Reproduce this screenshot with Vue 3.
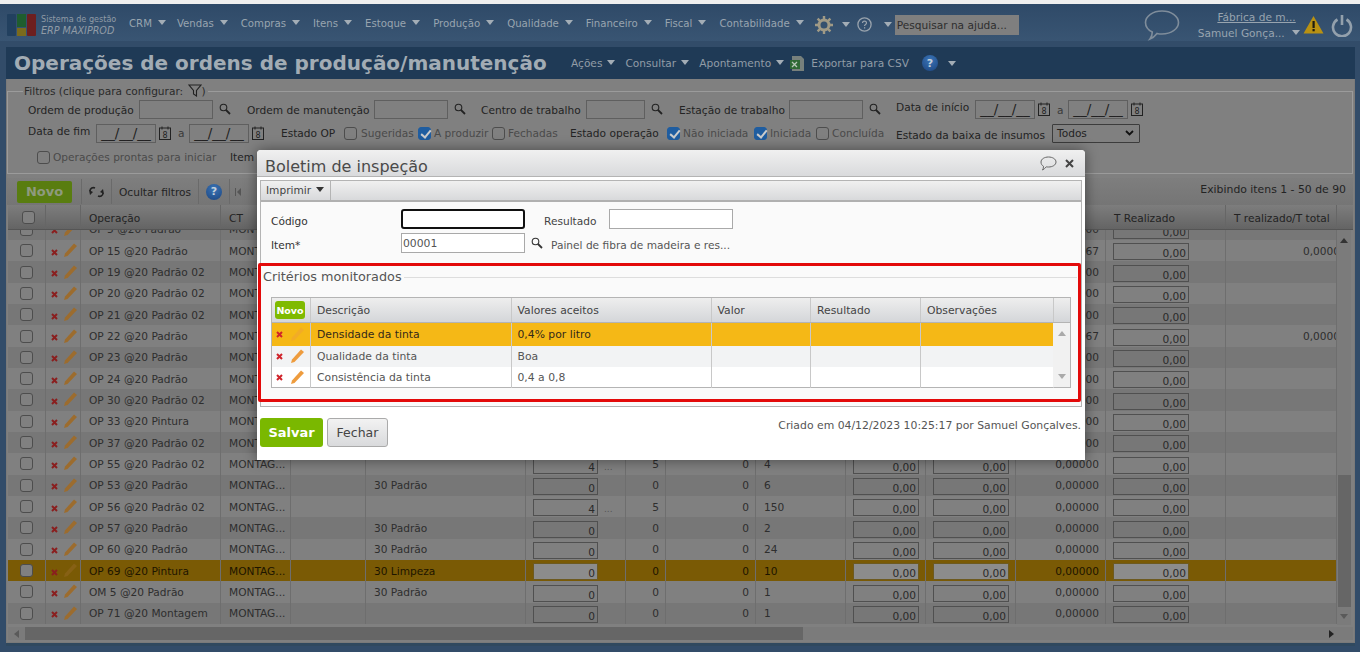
<script setup>
const navItems = ['CRM', 'Vendas', 'Compras', 'Itens', 'Estoque', 'Produção', 'Qualidade', 'Financeiro', 'Fiscal', 'Contabilidade']

// qty / extra / a / b / text: what can be seen around the dialog
const rows = [
  { op: 'OP 5 @20 Padrão', ct: 'MONTAG...', est: '30 Padrão', qty: '0', a: '0', b: '0', c: '1', t: '0,00000' },
  { op: 'OP 15 @20 Padrão', ct: 'MONTAG...', est: '30 Padrão', qty: '0', a: '0', b: '0', c: '1', t: '0,00067', r: '0,00000' },
  { op: 'OP 19 @20 Padrão 02', ct: 'MONTAG...', est: '', qty: '4', a: '5', b: '0', c: '4', t: '0,00000' },
  { op: 'OP 20 @20 Padrão 02', ct: 'MONTAG...', est: '', qty: '4', a: '5', b: '0', c: '4', t: '0,00000' },
  { op: 'OP 21 @20 Padrão 02', ct: 'MONTAG...', est: '', qty: '4', a: '5', b: '0', c: '4', t: '0,00000' },
  { op: 'OP 22 @20 Padrão', ct: 'MONTAG...', est: '30 Padrão', qty: '0', a: '0', b: '0', c: '1', t: '0,00067', r: '0,00000' },
  { op: 'OP 23 @20 Padrão', ct: 'MONTAG...', est: '30 Padrão', qty: '0', a: '0', b: '0', c: '1', t: '0,00000' },
  { op: 'OP 24 @20 Padrão', ct: 'MONTAG...', est: '30 Padrão', qty: '0', a: '0', b: '0', c: '1', t: '0,00000' },
  { op: 'OP 30 @20 Padrão 02', ct: 'MONTAG...', est: '', qty: '4', a: '5', b: '0', c: '4', t: '0,00000' },
  { op: 'OP 33 @20 Pintura', ct: 'MONTAG...', est: '30 Padrão', qty: '0', a: '0', b: '0', c: '1', t: '0,00000' },
  { op: 'OP 37 @20 Padrão 02', ct: 'MONTAG...', est: '', qty: '4', a: '5', b: '0', c: '4', t: '0,00000' },
  { op: 'OP 55 @20 Padrão 02', ct: 'MONTAG...', est: '', qty: '4', a: '5', b: '0', c: '4', t: '0,00000' },
  { op: 'OP 53 @20 Padrão', ct: 'MONTAG...', est: '30 Padrão', qty: '0', a: '0', b: '0', c: '6', t: '0,00000' },
  { op: 'OP 56 @20 Padrão 02', ct: 'MONTAG...', est: '', qty: '4', a: '5', b: '0', c: '150', t: '0,00000' },
  { op: 'OP 57 @20 Padrão', ct: 'MONTAG...', est: '30 Padrão', qty: '0', a: '0', b: '0', c: '2', t: '0,00000' },
  { op: 'OP 60 @20 Padrão', ct: 'MONTAG...', est: '30 Padrão', qty: '0', a: '0', b: '0', c: '24', t: '0,00000' },
  { op: 'OP 69 @20 Pintura', ct: 'MONTAG...', est: '30 Limpeza', qty: '0', a: '0', b: '0', c: '10', t: '0,00000', sel: true },
  { op: 'OM 5 @20 Padrão', ct: 'MONTAG...', est: '30 Padrão', qty: '0', a: '0', b: '0', c: '1', t: '0,00000' },
  { op: 'OP 71 @20 Montagem', ct: 'MONTAG...', est: '', qty: '0', a: '0', b: '0', c: '1', t: '0,00000' },
]

const criterios = [
  { desc: 'Densidade da tinta', vals: '0,4% por litro', sel: true },
  { desc: 'Qualidade da tinta', vals: 'Boa' },
  { desc: 'Consistência da tinta', vals: '0,4 a 0,8' },
]
</script>

<template>
  <div class="page">
    <header class="nav">
      <div class="logo">
        <svg width="30" height="24" viewBox="0 0 30 24">
          <rect x="0" y="1" width="9" height="22" rx="1" fill="#22405f" />
          <rect x="10" y="1" width="9" height="13" fill="#1f5d2e" />
          <rect x="10" y="15" width="9" height="8" fill="#7a6a1c" />
          <rect x="20" y="1" width="9" height="22" rx="1" fill="#6d1f1f" />
        </svg>
        <div class="logo-text">
          <span>Sistema de gestão</span>
          <em>ERP MAXIPROD</em>
        </div>
      </div>
      <ul class="menu">
        <li v-for="item in navItems" :key="item">{{ item }}<i class="caret"></i></li>
      </ul>
      <svg class="gear" width="18" height="18" viewBox="0 0 18 18">
        <circle cx="9" cy="9" r="5" fill="none" stroke="#a09a86" stroke-width="3" />
        <path d="M9 0v4M9 14v4M0 9h4M14 9h4M2.6 2.6l2.8 2.8M12.6 12.6l2.8 2.8M2.6 15.4l2.8-2.8M12.6 5.4l2.8-2.8" stroke="#a09a86" stroke-width="2.4" />
      </svg>
      <i class="caret gear-caret"></i>
      <svg class="q" width="15" height="15" viewBox="0 0 15 15">
        <circle cx="7.5" cy="7.5" r="6.6" fill="none" stroke="#99a3ad" stroke-width="1.3" />
        <path d="M5.5 6c0-2.6 4-2.6 4 0 0 1.5-2 1.4-2 3" fill="none" stroke="#99a3ad" stroke-width="1.2" />
        <rect x="7" y="10.2" width="1.2" height="1.3" fill="#99a3ad" />
      </svg>
      <i class="caret q-caret"></i>
      <div class="help-search">Pesquisar na ajuda...</div>
      <svg class="bubble" width="36" height="32" viewBox="0 0 36 32">
        <path d="M18 2c9 0 16.500 5 16.500 11.500S27 25 18 25c-2 0-3.500-.2-5-.6C11 27 8.500 29 6 30c1.500-2 2.300-4 2.300-7C4 21 1.500 17.500 1.500 13.500 1.500 7 9 2 18 2z" fill="none" stroke="#7f8d9b" stroke-width="1.6" />
      </svg>
      <div class="user">
        <a>Fábrica de m...</a>
        <span>Samuel Gonça...<i class="caret"></i></span>
      </div>
      <svg class="warn" width="21" height="19" viewBox="0 0 21 19">
        <path d="M10.500 1L20.500 18.500H.5z" fill="#b89112" />
        <rect x="9.500" y="6" width="2.200" height="7" fill="#1c1c10" />
        <rect x="9.500" y="14" width="2.200" height="2.300" fill="#1c1c10" />
      </svg>
      <svg class="power" width="22" height="24" viewBox="0 0 22 24">
        <path d="M6.500 6.500a9 9 0 1 0 9 0" fill="none" stroke="#93a0ac" stroke-width="2.600" />
        <path d="M11 2v10" stroke="#93a0ac" stroke-width="2.600" />
      </svg>
    </header>

    <main class="panel">
      <div class="titlebar">
        <h1>Operações de ordens de produção/manutenção</h1>
        <ul class="submenu">
          <li>Ações<i class="caret"></i></li>
          <li>Consultar<i class="caret"></i></li>
          <li>Apontamento<i class="caret"></i></li>
        </ul>
        <svg class="xls" width="17" height="17" viewBox="0 0 17 17">
          <path d="M3 1h9l3 3v12H3z" fill="#77807c" />
          <rect x="1" y="5" width="10" height="9" fill="#2f6a34" />
          <path d="M3 7l5 5M8 7l-5 5" stroke="#b8c8b8" stroke-width="1.300" />
        </svg>
        <span class="export">Exportar para CSV</span>
        <span class="help-dot">?</span>
        <i class="caret"></i>
      </div>

      <fieldset class="filters">
        <legend>Filtros (clique para configurar:
          <svg width="14" height="13" viewBox="0 0 14 13"><path d="M1 1h12L8.500 6.500V12l-3-2V6.500z" fill="none" stroke="#222" stroke-width="1.100" /></svg>)
        </legend>

        <div class="frow frow1">
          <label class="l1">Ordem de produção</label><span class="box w74"></span><svg class="mag" viewBox="0 0 12 12"><circle cx="4.500" cy="4.500" r="3.300" fill="none" stroke="#222" stroke-width="1.100" /><path d="M7 7l4 4" stroke="#222" stroke-width="1.800" /></svg>
          <label class="l2">Ordem de manutenção</label><span class="box w74"></span><svg class="mag" viewBox="0 0 12 12"><circle cx="4.500" cy="4.500" r="3.300" fill="none" stroke="#222" stroke-width="1.100" /><path d="M7 7l4 4" stroke="#222" stroke-width="1.800" /></svg>
          <label class="l3">Centro de trabalho</label><span class="box w59"></span><svg class="mag" viewBox="0 0 12 12"><circle cx="4.500" cy="4.500" r="3.300" fill="none" stroke="#222" stroke-width="1.100" /><path d="M7 7l4 4" stroke="#222" stroke-width="1.800" /></svg>
          <label class="l4">Estação de trabalho</label><span class="box w74"></span><svg class="mag" viewBox="0 0 12 12"><circle cx="4.500" cy="4.500" r="3.300" fill="none" stroke="#222" stroke-width="1.100" /><path d="M7 7l4 4" stroke="#222" stroke-width="1.800" /></svg>
          <label class="l5 up">Data de início</label><span class="box date">__/__/__</span><svg class="cal" viewBox="0 0 12 14"><rect x=".5" y="2" width="11" height="11.500" fill="none" stroke="#222" /><path d="M3 .5v3M9 .5v3" stroke="#222" /><text x="6" y="11.500" font-size="8" text-anchor="middle" fill="#222">8</text></svg>
          <label class="a">a</label><span class="box date">__/__/__</span><svg class="cal" viewBox="0 0 12 14"><rect x=".5" y="2" width="11" height="11.500" fill="none" stroke="#222" /><path d="M3 .5v3M9 .5v3" stroke="#222" /><text x="6" y="11.500" font-size="8" text-anchor="middle" fill="#222">8</text></svg>
        </div>

        <div class="frow frow2">
          <label class="l1b up">Data de fim</label><span class="box date">__/__/__</span><svg class="cal" viewBox="0 0 12 14"><rect x=".5" y="2" width="11" height="11.500" fill="none" stroke="#222" /><path d="M3 .5v3M9 .5v3" stroke="#222" /><text x="6" y="11.500" font-size="8" text-anchor="middle" fill="#222">8</text></svg>
          <label class="a">a</label><span class="box date">__/__/__</span><svg class="cal" viewBox="0 0 12 14"><rect x=".5" y="2" width="11" height="11.500" fill="none" stroke="#222" /><path d="M3 .5v3M9 .5v3" stroke="#222" /><text x="6" y="11.500" font-size="8" text-anchor="middle" fill="#222">8</text></svg>
          <label class="e1">Estado OP</label>
          <i class="cb cb1"></i><span class="opt t1">Sugeridas</span>
          <i class="cb on"></i><span class="opt t2">A produzir</span>
          <i class="cb"></i><span class="opt t3">Fechadas</span>
          <label class="e2">Estado operação</label>
          <i class="cb on"></i><span class="opt t4">Não iniciada</span>
          <i class="cb on"></i><span class="opt t5">Iniciada</span>
          <i class="cb"></i><span class="opt t6">Concluída</span>
          <label class="e3">Estado da baixa de insumos</label>
          <span class="select">Todos<svg width="9" height="6" viewBox="0 0 9 6"><path d="M1 1l3.500 3.500L8 1" fill="none" stroke="#111" stroke-width="1.800" /></svg></span>
        </div>

        <div class="frow frow3">
          <i class="cb"></i><span class="opt t7">Operações prontas para iniciar</span>
          <label class="e4">Item</label>
        </div>
      </fieldset>

      <div class="toolbar">
        <button class="novo">Novo</button>
        <span class="sep s1"></span>
        <svg class="refresh" width="15" height="12" viewBox="0 0 15 12">
          <path d="M1 5c0-3 3-4 5-3M14 7c0 3-3 4-5 3" fill="none" stroke="#222" stroke-width="1.600" />
          <path d="M4 6L1 9 0 4zM11 6l3-3 1 5z" fill="#222" />
        </svg>
        <span class="sep s2"></span>
        <span class="hide-filters">Ocultar filtros</span>
        <span class="sep s3"></span>
        <span class="help-dot">?</span>
        <span class="sep s4"></span>
        <svg class="first" width="6" height="8" viewBox="0 0 6 8"><path d="M0 0h1v8H0zM6 0v8L2 4z" fill="#555" /></svg>
        <span class="count">Exibindo itens 1 - 50 de 90</span>
      </div>

      <div class="grid">
        <div class="ghead gcols">
          <div class="c"><i class="cb"></i></div>
          <div class="c"></div>
          <div class="c txt">Operação</div>
          <div class="c txt">CT</div>
          <div class="c"></div><div class="c"></div><div class="c"></div><div class="c"></div><div class="c"></div><div class="c"></div><div class="c"></div><div class="c"></div><div class="c"></div>
          <div class="c txt">T Realizado</div>
          <div class="c txt">T realizado/T total</div>
        </div>

        <div class="gbody">
          <div class="gscroll">
            <div v-for="(row, i) in rows" :key="row.op" class="grow gcols" :class="{ odd: i % 2 === 0, sel: row.sel }">
              <div class="c"><i class="cb"></i></div>
              <div class="c acts">
                <svg class="x" width="7" height="7" viewBox="0 0 7 7"><path d="M1 1l5 5M6 1L1 6" stroke="#8a1f1f" stroke-width="2" /></svg>
                <svg class="pen" :class="{ faded: row.sel }" width="13" height="14" viewBox="0 0 13 14"><path d="M10 .5l3 2.500L3.500 13 0 14l1-3.500z" fill="#9c6c2e" /></svg>
              </div>
              <div class="c txt">{{ row.op }}</div>
              <div class="c txt">{{ row.ct }}</div>
              <div class="c"></div>
              <div class="c txt">{{ row.est }}</div>
              <div class="c inp-c"><span class="inp w65">{{ row.qty }}</span><span v-if="row.qty === '4'" class="dots">...</span></div>
              <div class="c num">{{ row.a }}</div>
              <div class="c num">{{ row.b }}</div>
              <div class="c txt">{{ row.c }}</div>
              <div class="c inp-c"><span class="inp w66">0,00</span></div>
              <div class="c inp-c"><span class="inp w76">0,00</span></div>
              <div class="c num">{{ row.t }}</div>
              <div class="c inp-c"><span class="inp w76">0,00</span></div>
              <div class="c clip"><span v-if="row.r">{{ row.r }}</span></div>
            </div>
          </div>
          <div class="vbar">
            <i class="up-arrow"></i>
            <div class="vthumb"></div>
            <i class="down-arrow"></i>
          </div>
        </div>

        <div class="hbar">
          <i class="left-arrow"></i>
          <div class="hthumb"></div>
          <i class="right-arrow"></i>
        </div>
      </div>
    </main>

    <section class="modal">
      <div class="modal-title">
        <h2>Boletim de inspeção</h2>
        <svg width="17" height="15" viewBox="0 0 17 15"><path d="M8.500 1c4 0 7.500 2 7.500 5s-3.500 5-7.500 5c-1 0-1.500 0-2.200-.2C5.300 12 4 13.300 2.500 14c.7-1 1-2 1-3.700C2 9.500 1 8 1 6c0-3 3.500-5 7.500-5z" fill="none" stroke="#666" /></svg>
        <svg class="close" width="9" height="9" viewBox="0 0 9 9"><path d="M1 1l7 7M8 1L1 8" stroke="#444" stroke-width="2" /></svg>
      </div>

      <div class="modal-box">
        <div class="modal-tools">
          <div class="print">Imprimir<i class="caret dark"></i></div>
        </div>

        <div class="form">
          <div class="form-row">
            <label class="f-label">Código</label>
            <span class="f-input focus"></span>
            <label class="f-res">Resultado</label>
            <span class="f-input"></span>
          </div>
          <div class="form-row">
            <label class="f-label">Item*</label>
            <span class="f-input val">00001</span>
            <svg class="f-mag" viewBox="0 0 12 12"><circle cx="4.500" cy="4.500" r="3.300" fill="none" stroke="#333" stroke-width="1.100" /><path d="M7 7l4 4" stroke="#333" stroke-width="1.800" /></svg>
            <span class="f-desc">Painel de fibra de madeira e res...</span>
          </div>
        </div>

        <fieldset class="crit">
          <legend>Critérios monitorados</legend>
          <div class="cgrid">
            <div class="chead ccols">
              <div class="cc"><button class="mini">Novo</button></div>
              <div class="cc">Descrição</div>
              <div class="cc">Valores aceitos</div>
              <div class="cc">Valor</div>
              <div class="cc">Resultado</div>
              <div class="cc">Observações</div>
              <div class="cc"></div>
            </div>
            <div class="cbody">
              <div class="crows">
                <div v-for="(c, i) in criterios" :key="c.desc" class="crow ccols" :class="{ csel: c.sel, calt: i === 1 }">
                  <div class="cc acts">
                    <svg width="7" height="7" viewBox="0 0 7 7"><path d="M1 1l5 5M6 1L1 6" stroke="#d0232a" stroke-width="2" /></svg>
                    <svg :class="{ faded: c.sel }" class="pen" width="13" height="14" viewBox="0 0 13 14"><path d="M10 .5l3 2.500L3.500 13 0 14l1-3.500z" fill="#ee9c3e" /></svg>
                  </div>
                  <div class="cc">{{ c.desc }}</div>
                  <div class="cc">{{ c.vals }}</div>
                  <div class="cc"></div>
                  <div class="cc"></div>
                  <div class="cc"></div>
                </div>
              </div>
              <div class="cbar"><i class="up-arrow"></i><i class="down-arrow"></i></div>
            </div>
          </div>
        </fieldset>
      </div>

      <div class="modal-foot">
        <button class="save">Salvar</button>
        <button class="closebtn">Fechar</button>
        <span class="created">Criado em 04/12/2023 10:25:17 por Samuel Gonçalves.</span>
      </div>

      <div class="redbox"></div>
    </section>
  </div>
</template>

<style>
html, body {
  margin: 0;
  background: #efefef;
}
</style>

<style scoped>
* {
  box-sizing: border-box;
}

.page {
  position: relative;
  height: 652px;
  width: 1360px;
  overflow: hidden;
  padding-top: 4px;
  font-family: "DejaVu Sans", sans-serif;
  font-size: 10.600px;
  color: #232323;
}

ul {
  list-style: none;
  margin: 0;
  padding: 0;
}

.caret {
  display: inline-block;
  width: 0;
  height: 0;
  border-left: 4px solid transparent;
  border-right: 4px solid transparent;
  border-top: 5px solid #a3adb6;
  margin-left: 5px;
  vertical-align: 2px;
}

.caret.dark {
  border-top-color: #333;
}

/* top bar */
.nav {
  height: 41px;
  background: linear-gradient(#2f4a68, #3a5674);
  display: flex;
  align-items: center;
  color: #98a4af;
  border-bottom: 0;
}

.logo {
  display: flex;
  align-items: center;
  margin-left: 7px;
  width: 122px;
  flex: none;
}

.logo-text {
  margin-left: 4px;
  display: flex;
  flex-direction: column;
  font-family: "DejaVu Sans Condensed", "DejaVu Sans", sans-serif;
  font-stretch: condensed;
  line-height: 12px;
  color: #909ba6;
  font-size: 9px;
  white-space: nowrap;
}

.logo-text em {
  font-size: 10.700px;
}

.menu {
  display: flex;
  font-family: "DejaVu Sans Condensed", "DejaVu Sans", sans-serif;
  font-stretch: condensed;
  font-size: 11.300px;
  flex: none;
  margin-top: -2px;
}

.menu li {
  white-space: nowrap;
  margin-right: 13px;
}

.menu li:first-child {
  margin-right: 11px;
}

.menu li:last-child {
  margin-right: 6px;
}

.menu li .caret {
  margin-left: 6px;
}

.gear {
  margin-left: 5px;
  flex: none;
}

.gear-caret {
  margin-left: 9px;
  flex: none;
}

.q {
  margin-left: 7px;
  flex: none;
}

.q-caret {
  margin-left: 12px;
  flex: none;
}

.help-search {
  width: 124px;
  height: 20px;
  margin-left: 3px;
  background: #7f7f7f;
  color: #2e2e2e;
  line-height: 20px;
  font-size: 10.600px;
  padding-left: 2px;
  white-space: nowrap;
  overflow: hidden;
  flex: none;
}

.bubble {
  margin-left: 125px;
  flex: none;
}

.user {
  width: 105px;
  margin-left: 15px;
  flex: none;
  text-align: right;
  display: flex;
  flex-direction: column;
  align-items: flex-end;
  line-height: 16px;
  white-space: nowrap;
}

.user a {
  text-decoration: underline;
  margin-right: 4px;
}

.user .caret {
  margin-left: 7px;
}

.warn {
  margin-left: 3px;
  flex: none;
}

.power {
  margin-left: 7px;
  flex: none;
}

/* main panel */
.panel {
  margin: 2px 5px 0 6px;
  height: 599px;
  background: #808080;
  border-bottom: 3px solid #30495f;
  box-shadow: 0 0 0 6px #324c69, inset 0 0 0 1px #7a7a7a;
  display: flex;
  flex-direction: column;
  position: relative;
}

.titlebar {
  height: 32px;
  background: #1f3a56;
  display: flex;
  align-items: center;
  color: #919ca6;
  flex: none;
}

.titlebar h1 {
  margin: 0 0 0 8px;
  width: 557px;
  font-size: 20px;
  font-weight: 700;
  color: #a2acb4;
  white-space: nowrap;
  flex: none;
}

.submenu {
  display: flex;
  gap: 10px;
  flex: none;
}

.xls {
  margin-left: 5px;
  flex: none;
}

.export {
  margin-left: 5px;
  flex: none;
}

.help-dot {
  display: inline-flex;
  width: 16px;
  height: 16px;
  border-radius: 50%;
  background: radial-gradient(circle at 50% 30%, #3a74b6, #1c4580);
  color: #c4d0da;
  font-weight: 700;
  font-size: 11px;
  align-items: center;
  justify-content: center;
  flex: none;
}

.titlebar .help-dot {
  margin-left: 13px;
}

.titlebar > .caret {
  margin-left: 10px;
}

/* filters */
.filters {
  margin: 5px 2px 0 1px;
  padding: 0;
  border: 1px solid #9b9b9b;
  height: 90px;
  min-width: 0;
  flex: none;
}

.filters legend {
  margin-left: 15px;
  padding: 0 2px 0 1px;
  line-height: 14px;
  white-space: nowrap;
  color: #2a2a2a;
}

.filters legend svg {
  vertical-align: -2px;
  margin-left: 1px;
}

.frow {
  display: flex;
  align-items: center;
  white-space: nowrap;
}

.frow label {
  flex: none;
}

.frow1 {
  height: 20px;
  margin-top: 1px;
  padding-left: 20px;
}

.frow1 label {
  padding-top: 2px;
}

.frow1 .up {
  top: -3px;
}

.frow2 {
  height: 20px;
  margin-top: 4px;
  padding-left: 20px;
}

.frow3 {
  height: 20px;
  margin-top: 4px;
  padding-left: 29px;
}

.box {
  height: 19px;
  border: 1px solid #5f5f5f;
  margin-left: 5px;
  flex: none;
}

.w74 {
  width: 74px;
}

.w59 {
  width: 59px;
}

.date {
  width: 60px;
  text-align: center;
  font-size: 13.500px;
  line-height: 17px;
  color: #222;
  overflow: hidden;
}

.mag {
  width: 12px;
  height: 12px;
  margin-left: 6px;
  flex: none;
}

.cal {
  width: 12px;
  height: 14px;
  margin-left: 3px;
  flex: none;
}

.up {
  position: relative;
  top: -2px;
}

.l1 {
  width: 106px;
}

.l2 {
  width: 122px;
  margin-left: 16px;
}

.l3 {
  width: 100px;
  margin-left: 15px;
}

.l4 {
  width: 105px;
  margin-left: 16px;
}

.l5 {
  width: 73px;
  margin-left: 15px;
  margin-right: 1px;
}

.a {
  margin-left: 7px;
  width: 6px;
  color: #3a3a3a;
}

.l1b {
  width: 63px;
}

.e1 {
  width: 54px;
  margin-left: 17px;
}

.cb {
  display: inline-block;
  width: 13px;
  height: 13px;
  border: 1px solid #4d4d4d;
  border-radius: 3px;
  flex: none;
  background: #808080;
  position: relative;
}

.cb.on {
  background: #1f5da0;
  border-color: #1f5da0;
}

.cb.on::after {
  content: "";
  position: absolute;
  left: 3.500px;
  top: .5px;
  width: 4px;
  height: 8px;
  border: solid #ccc;
  border-width: 0 2px 2px 0;
  transform: rotate(40deg);
}

.cb1 {
  margin-left: 9px;
}

.opt {
  margin-left: 3px;
  color: #4a4a4a;
  flex: none;
}

.opt + .cb {
  margin-left: 4px;
}

.t1 {
  width: 53px;
  margin-left: 4px;
}

.t2 {
  width: 54px;
}

.t3 {
  width: 50px;
}

.t4 {
  width: 67px;
}

.t5 {
  width: 42px;
}

.t6 {
  width: 50px;
}

.t7 {
  width: 164px;
  margin-left: 3px;
}

.e2 {
  width: 89px;
  margin-left: 12px;
  margin-right: 8px;
}

.e3 {
  width: 150px;
  margin-left: 14px;
  position: relative;
  top: 2px;
}

.e4 {
  margin-left: 13px;
}

.select {
  width: 88px;
  height: 19px;
  margin-left: 6px;
  border: 1px solid #3c3c3c;
  border-radius: 1px;
  padding: 0 5px 0 4px;
  display: flex;
  align-items: center;
  justify-content: space-between;
  flex: none;
}

/* toolbar */
.toolbar {
  height: 27px;
  margin: 4px 2px 0 1px;
  background: linear-gradient(#7e7e7e, #757575);
  display: flex;
  align-items: center;
  position: relative;
  flex: none;
}

.novo {
  width: 55px;
  height: 22px;
  margin-left: 10px;
  border: 0;
  border-radius: 2px;
  background: #597d10;
  color: #8e9a7e;
  font-family: inherit;
  font-weight: 700;
  font-size: 13px;
  padding: 0;
  flex: none;
}

.sep {
  width: 1px;
  height: 25px;
  background: #6a6a6a;
  flex: none;
}

.s1 {
  margin-left: 9px;
}

.refresh {
  margin: 0 7px;
  flex: none;
}

.hide-filters {
  width: 86px;
  padding-left: 7px;
  flex: none;
}

.toolbar .help-dot {
  margin: 0 7px;
}

.first {
  margin-left: 5px;
  flex: none;
}

.count {
  position: absolute;
  right: 7px;
  top: 5px;
  font-size: 10.850px;
}

/* main grid */
.grid {
  margin: 0 2px 0 1.500px;
  display: flex;
  flex-direction: column;
  flex: 1;
  min-height: 0;
}

.gcols {
  display: grid;
  grid-template-columns: 38.500px 35px 140px 70px 75px 160px 100px 40px 90px 90px 80px 90px 90px 120px 111px;
  width: 1329.500px;
}

.ghead {
  height: 25px;
  background: linear-gradient(#7d7d7d, #646464);
  width: 100%;
  border-bottom: 1px solid #555;
  flex: none;
}

.ghead .c {
  border-right: 1px solid #666;
  display: flex;
  align-items: center;
}

.ghead .txt {
  padding-top: 2px;
}

.ghead .c:first-child {
  justify-content: center;
  padding-left: 5px;
}

.ghead .c:nth-child(n+5):nth-child(-n+13) {
  border-right-color: transparent;
}

.c {
  min-width: 0;
  border-right: 1px solid #6e6e6e;
  height: 100%;
}

.txt {
  padding-left: 8px;
  display: flex;
  align-items: center;
  white-space: nowrap;
}

.gbody {
  height: 395px;
  display: flex;
  overflow: hidden;
  flex: none;
}

.gscroll {
  width: 1329.500px;
  overflow: hidden;
  flex: none;
}

.grow {
  height: 21.330px;
  background: #808080;
  color: #2e2e2e;
}

.grow:first-child {
  margin-top: -11.300px;
}

.grow.odd {
  background: #777;
}

.grow.sel {
  background: #7a5a05;
  color: #1d1500;
}

.grow .c:first-child {
  display: flex;
  align-items: center;
  justify-content: center;
}

.acts {
  display: flex;
  align-items: center;
  gap: 6px;
  padding-left: 5px;
}

.acts svg {
  flex: none;
}

.acts .x {
  margin-top: 3px;
}

.pen {
  margin-top: -1px;
}

.faded {
  opacity: .4;
}

.num {
  display: flex;
  align-items: center;
  justify-content: flex-end;
  padding-right: 6px;
  white-space: nowrap;
}

.clip {
  overflow: hidden;
  white-space: nowrap;
  padding-left: 77px;
  display: flex;
  align-items: center;
}

.inp-c {
  display: flex;
  align-items: flex-end;
  padding: 0 0 1px 7px;
  position: relative;
}

.inp {
  height: 17px;
  border: 1px solid #505050;
  text-align: right;
  padding-right: 2px;
  line-height: 19px;
  overflow: hidden;
  color: #2a2a2a;
  flex: none;
}

.sel .inp {
  background: #8c8c8c;
  border-color: #6d5a20;
}

.w65 {
  width: 65px;
}

.w66 {
  width: 66px;
}

.w76 {
  width: 76px;
}

.dots {
  margin: 0 0 2px 6px;
  color: #555;
  font-size: 9px;
}

.vbar {
  width: 14px;
  background: #7b7b7b;
  display: flex;
  flex-direction: column;
  align-items: center;
  position: relative;
  flex: none;
}

.up-arrow {
  width: 0;
  height: 0;
  border-left: 4px solid transparent;
  border-right: 4px solid transparent;
  border-bottom: 5px solid #333;
  margin-top: 8px;
}

.down-arrow {
  width: 0;
  height: 0;
  border-left: 4px solid transparent;
  border-right: 4px solid transparent;
  border-top: 5px solid #5a5a5a;
  margin-top: auto;
  margin-bottom: 6px;
}

.vthumb {
  position: absolute;
  left: 1px;
  right: 0;
  top: 245px;
  height: 132px;
  background: #666;
}

.hbar {
  height: 13px;
  margin-top: 2px;
  display: flex;
  align-items: center;
  background: #7b7b7b;
  flex: none;
  position: relative;
}

.left-arrow {
  width: 0;
  height: 0;
  border-top: 4px solid transparent;
  border-bottom: 4px solid transparent;
  border-right: 5px solid #5a5a5a;
  margin-left: 6px;
}

.hthumb {
  width: 778px;
  height: 13px;
  margin-left: 6px;
  background: #666;
}

.right-arrow {
  width: 0;
  height: 0;
  border-top: 4px solid transparent;
  border-bottom: 4px solid transparent;
  border-left: 5px solid #222;
  margin-left: auto;
  margin-right: 19px;
}

/* dialog */
.modal {
  position: absolute;
  left: 257px;
  top: 150px;
  width: 828px;
  height: 310px;
  background: #fff;
  border-radius: 4px 4px 0 0;
  box-shadow: 0 0 14px rgba(0, 0, 0, .45);
  color: #444;
}

.modal-title {
  height: 27px;
  background: linear-gradient(#f0f0f0, #d9dadc);
  border-radius: 4px 4px 0 0;
  border-bottom: 1px solid #b4b4b4;
  display: flex;
  align-items: center;
  padding: 0 11px 0 8px;
}

.modal-title h2 {
  margin: 6px auto 0 0;
  font-size: 16px;
  font-weight: 400;
  color: #4a4a4a;
}

.modal-title .close {
  margin-left: 8px;
}

.modal-box {
  margin: 3px 3px 0;
  border: 1px solid #b4b4b4;
  height: 227px;
  background: #fafafa;
}

.modal-tools {
  height: 21px;
  background: linear-gradient(#f0f0f0, #d8d9db);
  border-bottom: 2px solid #b0b0b0;
}

.print {
  width: 70px;
  height: 19px;
  line-height: 19px;
  padding-left: 5px;
  border-right: 1px solid #b4b4b4;
}

.print .caret {
  margin-left: 5px;
}

.form {
  padding: 7px 0 0 10px;
}

.form-row {
  display: flex;
  align-items: center;
  height: 20px;
  margin-bottom: 4px;
}

.f-label {
  width: 130px;
  flex: none;
  color: #333;
  padding-top: 3px;
}

.f-res {
  margin-left: 19px;
  width: 65px;
  flex: none;
  padding-top: 3px;
}

.f-input {
  width: 124px;
  height: 20px;
  border: 1px solid #a9a9a9;
  background: #fff;
  flex: none;
}

.f-input.focus {
  border: 2px solid #111;
  border-radius: 3px;
}

.f-input.val {
  font-size: 10.800px;
  padding-left: 1px;
  line-height: 19px;
  color: #555;
}

.f-mag {
  width: 12px;
  height: 12px;
  margin-left: 6px;
  flex: none;
}

.f-desc {
  margin-left: 8px;
  padding-top: 3px;
  white-space: nowrap;
  color: #555;
}

.crit {
  margin: 16px 4px 0 2px;
  padding: 0;
  border: 0;
  border-top: 1px solid #ddd;
  min-width: 0;
}

.crit legend {
  padding: 0 2px 0 0;
  margin-left: 0;
  font-size: 12.800px;
  line-height: 16px;
  color: #555;
}

.cgrid {
  margin: 12px 0 0 8px;
  width: 800px;
  height: 91px;
  border: 1px solid #b4b4b4;
  background: #fff;
  font-size: 10.800px;
}

.ccols {
  display: grid;
  grid-template-columns: 39px 200.500px 200px 99.500px 110px 132.500px 18px;
}

.chead {
  height: 25px;
  background: linear-gradient(#eee, #d4d6d9);
  border-bottom: 1px solid #b4b4b4;
}

.cc {
  border-right: 1px solid #c8c8c8;
  padding-left: 6px;
  display: flex;
  align-items: center;
  white-space: nowrap;
  min-width: 0;
}

.chead .cc:first-child {
  padding-left: 3px;
}

.chead .cc:last-child {
  border-right: 0;
}

.mini {
  width: 30px;
  height: 18px;
  border: 0;
  border-radius: 3px;
  background: #7fba00;
  color: #fff;
  font-family: inherit;
  font-size: 9.500px;
  font-weight: 700;
  padding: 0;
}

.cbody {
  display: flex;
  height: 64px;
}

.crows {
  width: 781px;
  flex: none;
}

.crow {
  height: 21px;
  grid-template-columns: 39px 200.500px 200px 99.500px 110px 132.500px;
  color: #555;
}

.crow.csel {
  height: 23px;
  background: #f5b816;
  color: #33291a;
}

.crow.calt {
  background: #f2f3f4;
}

.crow .acts {
  padding-left: 4px;
  gap: 8px;
}

.cbar {
  width: 18px;
  background: #f1f1f1;
  display: flex;
  flex-direction: column;
  align-items: center;
}

.cbar .up-arrow {
  border-bottom-color: #aaa;
  margin-top: 8px;
}

.cbar .down-arrow {
  border-top-color: #aaa;
  margin-bottom: 8px;
}

.modal-foot {
  display: flex;
  align-items: flex-start;
  padding: 11px 4px 0 3px;
}

.save {
  width: 63px;
  height: 29px;
  border: 0;
  border-radius: 3px;
  background: #7ab800;
  color: #fff;
  font-family: inherit;
  font-weight: 700;
  font-size: 13px;
  padding: 0;
}

.closebtn {
  width: 61px;
  height: 29px;
  margin-left: 4px;
  border: 1px solid #aaa;
  border-radius: 3px;
  background: linear-gradient(#f2f2f2, #d9dadc);
  color: #444;
  font-family: inherit;
  font-size: 12.500px;
  padding: 0;
}

.created {
  margin-left: auto;
  margin-top: 1px;
  white-space: nowrap;
  color: #555;
  font-size: 10.850px;
}

.redbox {
  position: absolute;
  left: 1px;
  top: 113px;
  width: 823px;
  height: 139px;
  border: 3px solid #e30a0a;
  border-radius: 2px;
  pointer-events: none;
}
</style>
